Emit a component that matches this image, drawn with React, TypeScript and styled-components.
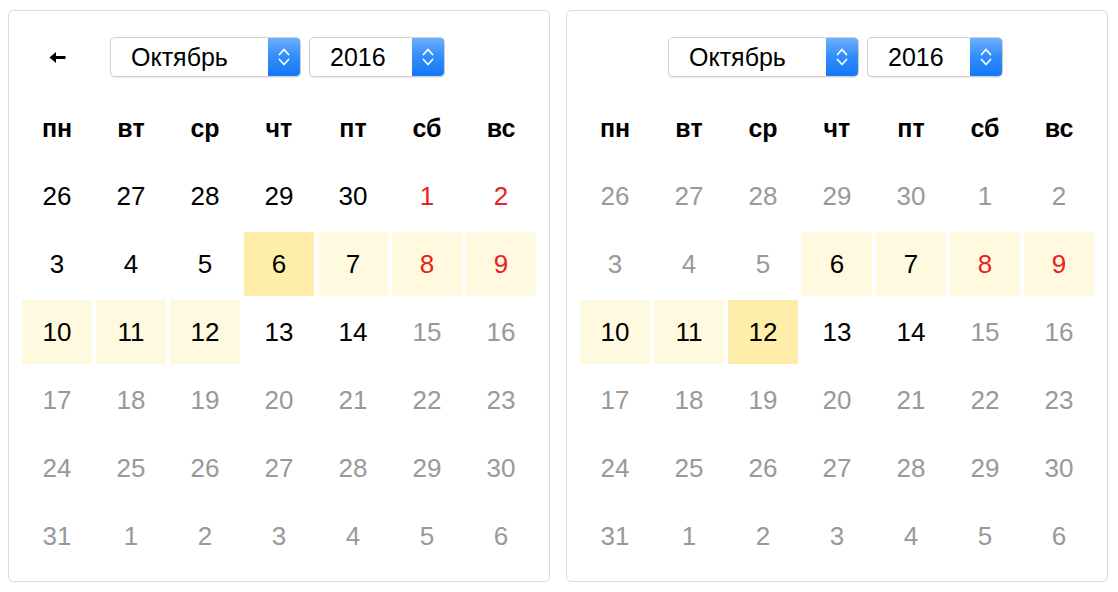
import React from "react";
import styled, { createGlobalStyle } from "styled-components";

const Global = createGlobalStyle`
  html, body { margin: 0; padding: 0; background: #ffffff; }
  body { font-family: "Liberation Sans", Arial, Helvetica, sans-serif; color: #000; }
`;

type Tone = "black" | "red" | "grey";
type Hl = "none" | "light" | "strong";
type Day = { d: number; tone: Tone; hl: Hl };

const Page = styled.div`
  display: flex;
  gap: 16px;
  padding: 10px 8px;
`;

const Panel = styled.section`
  width: 514px;
  padding: 13px;
  border: 1px solid #dadada;
  border-radius: 5px;
  display: flex;
  flex-direction: column;
`;

const Nav = styled.div`
  height: 66px;
  margin-bottom: 6px;
  display: flex;
  align-items: center;
`;

const ArrowSlot = styled.div`
  width: 70px;
  margin-right: 18px;
  display: flex;
  align-items: center;
  justify-content: center;
`;

const Select = styled.div<{ $w: number }>`
  width: ${(p) => p.$w}px;
  height: 40px;
  box-sizing: border-box;
  margin-right: 8px;
  border: 1px solid #cfcfcf;
  border-radius: 5px;
  box-shadow: 0 1px 1px rgba(0, 0, 0, 0.08);
  display: flex;
  align-items: stretch;
  overflow: hidden;
  background: #fff;
`;

const SelectText = styled.span`
  flex: 1;
  padding-left: 20px;
  display: flex;
  align-items: center;
  font-size: 25px;
  color: #000;
`;

const Stepper = styled.span`
  width: 32px;
  background: linear-gradient(to bottom, #6db0fb 0%, #2f8cfb 50%, #1479fa 100%);
  display: flex;
  align-items: center;
  justify-content: center;
`;

const Grid = styled.div`
  display: grid;
  grid-template-columns: repeat(7, 70px);
  grid-auto-rows: 64px;
  gap: 4px;
`;

const Head = styled.div`
  display: flex;
  align-items: center;
  justify-content: center;
  font-size: 25px;
  font-weight: bold;
`;

const toneColor: Record<Tone, string> = {
  black: "#000000",
  red: "#e8211c",
  grey: "#999999",
};
const hlColor: Record<Hl, string> = {
  none: "transparent",
  light: "#fff9df",
  strong: "#ffeeaa",
};

const Cell = styled.div<{ $tone: Tone; $hl: Hl }>`
  display: flex;
  align-items: center;
  justify-content: center;
  font-size: 26px;
  color: ${(p) => toneColor[p.$tone]};
  background: ${(p) => hlColor[p.$hl]};
`;

const Chevrons = () => (
  <svg width="14" height="24" viewBox="0 0 14 24" fill="none">
    <path d="M2.5 9.5 L7 4.5 L11.5 9.5" stroke="#fff" strokeWidth="1.7" strokeLinecap="round" strokeLinejoin="round" />
    <path d="M2.5 14.5 L7 19.5 L11.5 14.5" stroke="#fff" strokeWidth="1.7" strokeLinecap="round" strokeLinejoin="round" />
  </svg>
);

const BackArrow = () => (
  <svg width="17" height="13" viewBox="0 0 17 13">
    <path d="M0.5 6.5 L7 1 L7 12 Z" fill="#000" />
    <rect x="5.5" y="5" width="11" height="3" fill="#000" />
  </svg>
);

const weekdays = ["пн", "вт", "ср", "чт", "пт", "сб", "вс"];

const mk = (list: number[], tones: Tone[], hls: Hl[]): Day[] =>
  list.map((d, i) => ({ d, tone: tones[i], hl: hls[i] }));

const nums = [
  26, 27, 28, 29, 30, 1, 2,
  3, 4, 5, 6, 7, 8, 9,
  10, 11, 12, 13, 14, 15, 16,
  17, 18, 19, 20, 21, 22, 23,
  24, 25, 26, 27, 28, 29, 30,
  31, 1, 2, 3, 4, 5, 6,
];

const G: Tone = "grey";
const B: Tone = "black";
const R: Tone = "red";
const n: Hl = "none";
const l: Hl = "light";
const s: Hl = "strong";

const tail: Tone[] = Array(21).fill(G);
const tailHl: Hl[] = Array(21).fill(n);

const left = mk(
  nums,
  [B, B, B, B, B, R, R, B, B, B, B, B, R, R, B, B, B, B, B, G, G, ...tail],
  [n, n, n, n, n, n, n, n, n, n, s, l, l, l, l, l, l, n, n, n, n, ...tailHl]
);

const right = mk(
  nums,
  [G, G, G, G, G, G, G, G, G, G, B, B, R, R, B, B, B, B, B, G, G, ...tail],
  [n, n, n, n, n, n, n, n, n, n, l, l, l, l, l, l, s, n, n, n, n, ...tailHl]
);

const Calendar = ({ days, back }: { days: Day[]; back: boolean }) => (
  <Panel>
    <Nav>
      <ArrowSlot>{back ? <BackArrow /> : null}</ArrowSlot>
      <Select $w={191}>
        <SelectText>Октябрь</SelectText>
        <Stepper>
          <Chevrons />
        </Stepper>
      </Select>
      <Select $w={136}>
        <SelectText>2016</SelectText>
        <Stepper>
          <Chevrons />
        </Stepper>
      </Select>
    </Nav>
    <Grid>
      {weekdays.map((w) => (
        <Head key={w}>{w}</Head>
      ))}
      {days.map((c, i) => (
        <Cell key={i} $tone={c.tone} $hl={c.hl}>
          {c.d}
        </Cell>
      ))}
    </Grid>
  </Panel>
);

export default function App() {
  return (
    <>
      <Global />
      <Page>
        <Calendar days={left} back={true} />
        <Calendar days={right} back={false} />
      </Page>
    </>
  );
}
